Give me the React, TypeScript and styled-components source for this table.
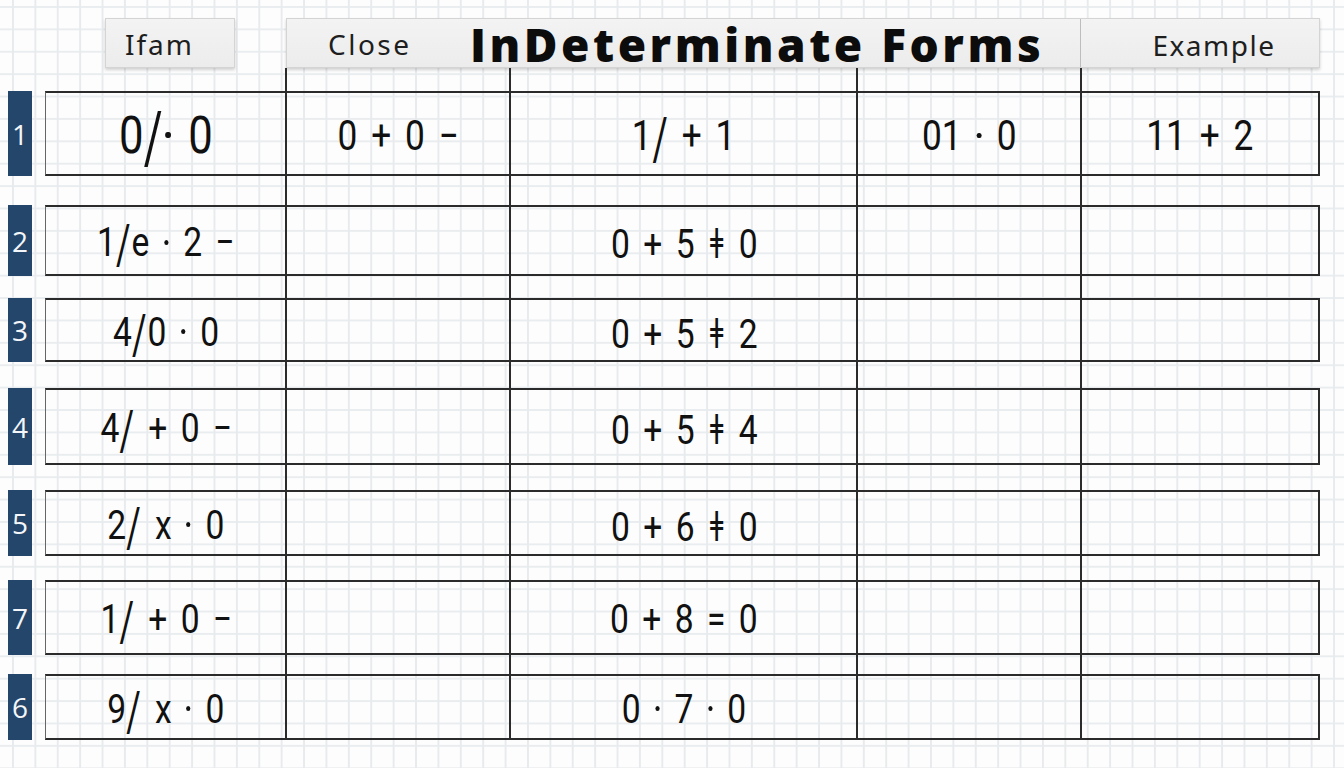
import React from "react";
import styled, { createGlobalStyle } from "styled-components";

const GlobalStyle = createGlobalStyle`
  html, body {
    margin: 0;
    padding: 0;
  }
  body {
    width: 1344px;
    height: 768px;
    overflow: hidden;
    background-color: #fdfdfd;
    background-image:
      linear-gradient(to right, #e8ebee 1.5px, transparent 1.5px),
      linear-gradient(to bottom, #eaedef 1.5px, transparent 1.5px);
    background-size: 22.4px 22.4px;
    background-position: 12px 6px;
    font-family: "Noto Sans", "Open Sans", sans-serif;
  }
`;

const COLS = "24px 13px 241px 224px 347px 224px 239px";
const INK = "#2b2b2b";

const Sheet = styled.div`
  padding: 18px 0 0 8px;
  display: flex;
  flex-direction: column;
`;

const HeaderRow = styled.div`
  display: grid;
  grid-template-columns: ${COLS};
  height: 50px;
`;

const SmallTab = styled.div`
  grid-column: 3;
  margin-left: 60px;
  width: 130px;
  box-sizing: border-box;
  background: linear-gradient(#f3f3f3, #ececec);
  border: 1px solid #d4d4d4;
  box-shadow: 0 2px 3px rgba(0, 0, 0, 0.18);
  display: flex;
  align-items: center;
  padding-left: 19px;
  padding-top: 2px;
  font-size: 28px;
  letter-spacing: 2px;
  color: #1e1e1e;
`;

const TitleBar = styled.div`
  grid-column: 4 / -1;
  box-sizing: border-box;
  background: linear-gradient(#f3f3f3, #ececec);
  border: 1px solid #d4d4d4;
  box-shadow: 0 2px 3px rgba(0, 0, 0, 0.18);
  display: flex;
  align-items: center;
`;

const Label = styled.div`
  font-size: 28px;
  letter-spacing: 2.5px;
  color: #1e1e1e;
  padding-left: 41px;
  padding-top: 2px;
  width: 142px;
`;

const Title = styled.h1`
  flex: 1;
  margin: 0;
  font-family: "Open Sans", "Noto Sans", sans-serif;
  font-weight: 800;
  font-size: 46px;
  letter-spacing: 3.5px;
  color: #0c0c0c;
  line-height: 1;
  padding-top: 2px;
  white-space: nowrap;
`;

const ExampleCell = styled.div`
  width: 239px;
  height: 100%;
  box-sizing: border-box;
  border-left: 1.5px solid #bdbdbd;
  display: flex;
  align-items: center;
  justify-content: center;
  font-size: 28px;
  letter-spacing: 1.5px;
  color: #1e1e1e;
  padding-left: 28px;
  padding-top: 3px;
`;

const Spacer = styled.div<{ $h: number }>`
  display: grid;
  grid-template-columns: ${COLS};
  height: ${(p) => p.$h}px;
`;

const Rule = styled.div<{ $col: number }>`
  grid-column: ${(p) => p.$col};
  border-left: 2px solid ${INK};
  margin-left: -1px;
`;

const Row = styled.div<{ $h: number }>`
  display: grid;
  grid-template-columns: ${COLS};
  height: ${(p) => p.$h}px;
`;

const NumTab = styled.div`
  grid-column: 1;
  background: #24466a;
  color: #f4f6f9;
  font-family: "Open Sans", "Noto Sans", sans-serif;
  font-size: 28px;
  display: flex;
  align-items: center;
  justify-content: center;
`;

const Cell = styled.div<{ $col: number; $first?: boolean; $last?: boolean; $size: number }>`
  grid-column: ${(p) => p.$col};
  box-sizing: border-box;
  border-top: 2px solid ${INK};
  border-bottom: 2px solid ${INK};
  border-left: ${(p) => (p.$first ? "1.5px solid #666" : `2px solid ${INK}`)};
  border-right: ${(p) => (p.$last ? `2px solid ${INK}` : "none")};
  margin-left: ${(p) => (p.$first ? "0" : "-1px")};
  display: flex;
  align-items: center;
  justify-content: center;
  font-family: "Roboto", "Noto Sans", sans-serif;
  font-size: ${(p) => p.$size}px;
  color: #111;
  white-space: pre;
  padding-top: 4px;
`;

const Narrow = styled.span`
  display: inline-block;
  transform: scaleX(0.84);
  word-spacing: 6px;
`;

const Slash = styled.span`
  display: inline-block;
  transform: scale(1.05, 1.4) translateY(4%);
  margin: 0 1px;
`;

const Dot = styled.span`
  display: inline-block;
  width: 0.13em;
  height: 0.13em;
  border-radius: 50%;
  background: #111;
  vertical-align: 0.28em;
  margin: 0 0.04em;
`;

function Expr({ text }: { text: string }) {
  // tall slash and round centre dot, as written on the sheet
  return (
    <Narrow>
      {text.split("").map((c, i) =>
        c === "/" ? (
          <Slash key={i}>/</Slash>
        ) : c === "·" ? (
          <Dot key={i} />
        ) : (
          <React.Fragment key={i}>{c}</React.Fragment>
        )
      )}
    </Narrow>
  );
}

interface RowData {
  n: string;
  h: number;
  gapAfter: number;
  cells: string[];
}

const rows: RowData[] = [
  { n: "1", h: 85, gapAfter: 29, cells: ["0/· 0", "0 + 0 −", "1/ + 1", "01 · 0", "11 + 2"] },
  { n: "2", h: 71, gapAfter: 22, cells: ["1/e · 2 −", "", "0 + 5 ǂ 0", "", ""] },
  { n: "3", h: 64, gapAfter: 26, cells: ["4/0 · 0", "", "0 + 5 ǂ 2", "", ""] },
  { n: "4", h: 77, gapAfter: 25, cells: ["4/ + 0 −", "", "0 + 5 ǂ 4", "", ""] },
  { n: "5", h: 66, gapAfter: 24, cells: ["2/ x · 0", "", "0 + 6 ǂ 0", "", ""] },
  { n: "7", h: 75, gapAfter: 19, cells: ["1/ + 0 −", "", "0 + 8 = 0", "", ""] },
  { n: "6", h: 66, gapAfter: 0, cells: ["9/ x · 0", "", "0 · 7 · 0", "", ""] },
];

function Gap({ h }: { h: number }) {
  return (
    <Spacer $h={h}>
      <Rule $col={4} />
      <Rule $col={5} />
      <Rule $col={6} />
      <Rule $col={7} />
    </Spacer>
  );
}

export default function App() {
  return (
    <>
      <GlobalStyle />
      <Sheet>
        <HeaderRow>
          <SmallTab>Ifam</SmallTab>
          <TitleBar>
            <Label>Close</Label>
            <Title>InDeterminate Forms</Title>
            <ExampleCell>Example</ExampleCell>
          </TitleBar>
        </HeaderRow>
        <Gap h={23} />
        {rows.map((r, ri) => (
          <React.Fragment key={r.n + ri}>
            <Row $h={r.h}>
              <NumTab>{r.n}</NumTab>
              {r.cells.map((c, ci) => (
                <Cell
                  key={ci}
                  $col={ci + 3}
                  $first={ci === 0}
                  $last={ci === 4}
                  $size={ri === 0 ? (ci === 0 ? 52 : 42) : 40}
                >
                  <Expr text={c} />
                </Cell>
              ))}
            </Row>
            {r.gapAfter > 0 && <Gap h={r.gapAfter} />}
          </React.Fragment>
        ))}
      </Sheet>
    </>
  );
}
